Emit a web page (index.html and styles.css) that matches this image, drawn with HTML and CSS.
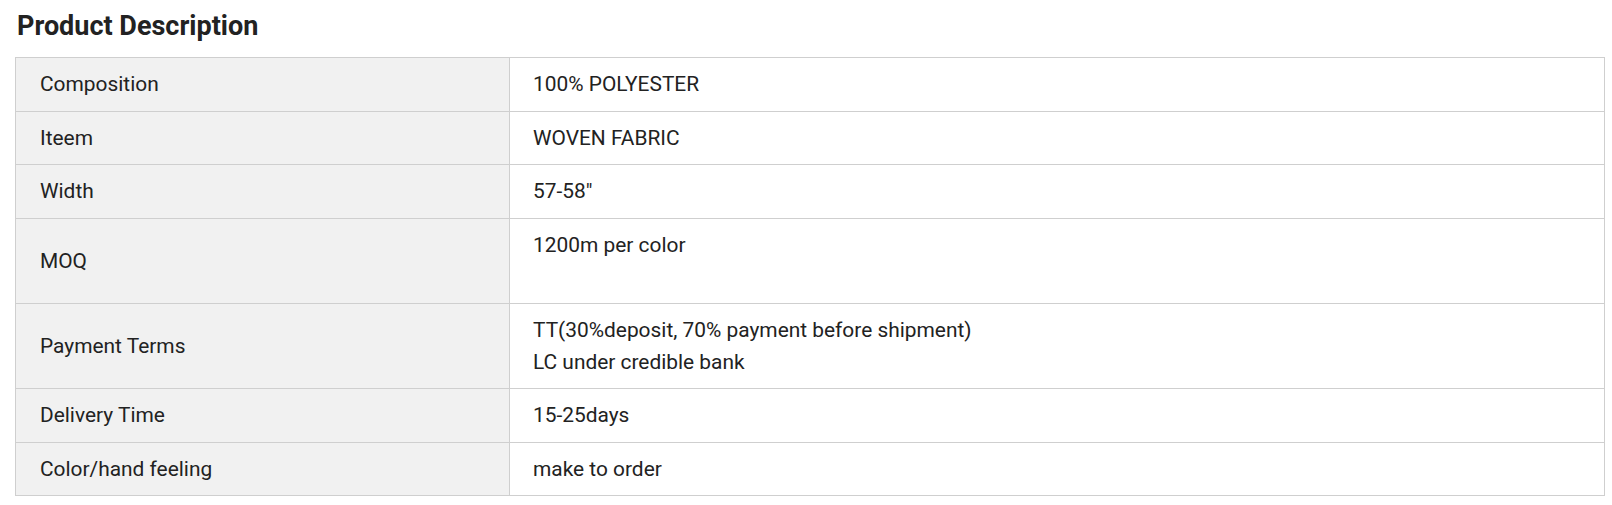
FILE: index.html
```html
<!DOCTYPE html>
<html lang="en">
<head>
<meta charset="utf-8">
<title>Product Description</title>
<link rel="stylesheet" href="styles.css">
</head>
<body>
<section class="product-desc">
  <h2 class="title">Product Description</h2>
  <table class="spec">
    <colgroup>
      <col class="col-label">
      <col class="col-value">
    </colgroup>
    <tbody>
      <tr><td class="label">Composition</td><td class="value">100% POLYESTER</td></tr>
      <tr><td class="label">Iteem</td><td class="value">WOVEN FABRIC</td></tr>
      <tr><td class="label">Width</td><td class="value">57-58"</td></tr>
      <tr><td class="label">MOQ</td><td class="value">1200m per color<br>&nbsp;</td></tr>
      <tr><td class="label">Payment Terms</td><td class="value">TT(30%deposit, 70% payment before shipment)<br>LC under credible bank</td></tr>
      <tr><td class="label">Delivery Time</td><td class="value">15-25days</td></tr>
      <tr><td class="label">Color/hand feeling</td><td class="value">make to order</td></tr>
    </tbody>
  </table>
</section>
</body>
</html>
```
FILE: styles.css
```css
html, body {
  margin: 0;
  padding: 0;
  background: #ffffff;
}
body {
  font-family: Roboto, "Liberation Sans", Arial, sans-serif;
  color: #222222;
}
.product-desc {
  padding: 10px 7px 0 15px;
}
.title {
  margin: 0 0 15px 2px;
  font-size: 27px;
  line-height: 32px;
  font-weight: 700;
  color: #222222;
}
.spec {
  width: 1590px;
  border-collapse: collapse;
  table-layout: fixed;
  font-size: 20.9px;
  line-height: 31.5px;
}
.col-label { width: 494px; }
.spec td {
  border: 1px solid #cfcfcf;
  padding: 11.3px 23px 9.8px;
  vertical-align: middle;
  text-align: left;
}
.spec td.label {
  background: #f1f1f1;
  padding-left: 24px;
}
.spec td.value {
  background: #ffffff;
}
```
